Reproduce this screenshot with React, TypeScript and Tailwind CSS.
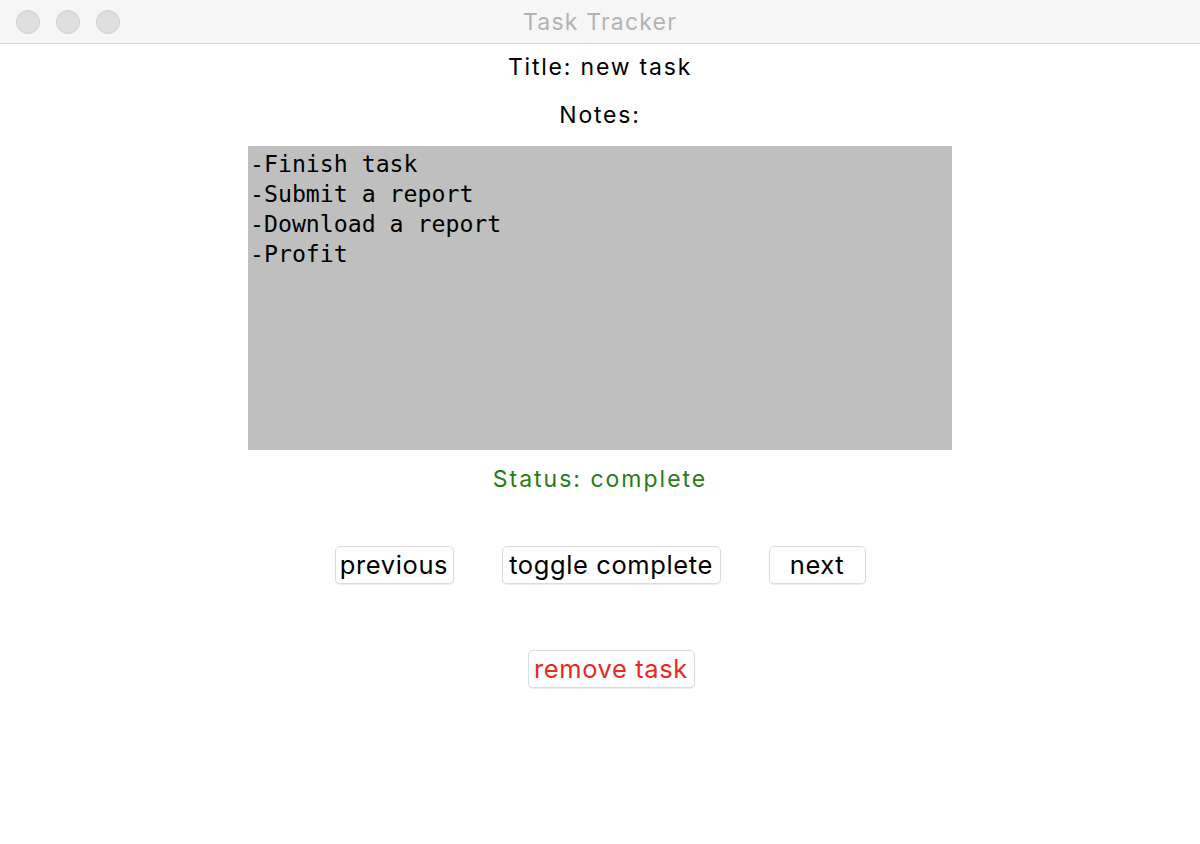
const notes = ["-Finish task", "-Submit a report", "-Download a report", "-Profit"];

const Button = ({ label, className }: { label: string; className: string }) => (
  <button
    className={`h-[38px] rounded-[5px] border border-[#dcdcdc] bg-white text-[25.5px] leading-none tracking-[0.6px] shadow-[0_1px_1px_rgba(0,0,0,0.08)] ${className}`}
  >
    {label}
  </button>
);

export default function App() {
  return (
    <div className="flex h-[844px] w-[1200px] flex-col bg-white font-['Inter','Liberation_Sans',sans-serif]">
      {/* title bar */}
      <div className="relative flex h-[44px] shrink-0 items-center justify-center border-b border-[#d4d4d4] bg-[#f6f6f6]">
        <div className="absolute left-[16px] top-[10px] flex gap-[16px]">
          {[0, 1, 2].map((i) => (
            <div key={i} className="h-[24px] w-[24px] rounded-full border border-[#cfcfcf] bg-[#dedede]" />
          ))}
        </div>
        <span className="pt-[2px] text-[23px] tracking-[1.2px] text-[#b3b3b3]">Task Tracker</span>
      </div>

      <div className="flex flex-col items-center">
        <div className="mt-[8px] h-[30px] text-[23px] leading-[30px] tracking-[1.8px] text-black">Title: new task</div>
        <div className="mt-[18px] h-[30px] text-[23px] leading-[30px] tracking-[1.8px] text-black">Notes:</div>

        <div className="mt-[16px] h-[304px] w-[704px] bg-[#bfbfbf] px-[2px] pt-[3px] font-['DejaVu_Sans_Mono','Liberation_Mono',monospace] text-[23.2px] leading-[30px] text-black">
          {notes.map((n) => (
            <div key={n}>{n}</div>
          ))}
        </div>

        <div className="mt-[14px] h-[30px] text-[23px] leading-[30px] tracking-[2px] text-[#2a7b18]">Status: complete</div>

        <div className="mt-[52px] flex gap-[48px]">
          <Button label="previous" className="w-[119px] text-black" />
          <Button label="toggle complete" className="w-[219px] text-black" />
          <Button label="next" className="w-[97px] text-black" />
        </div>

        <Button label="remove task" className="ml-[22px] mt-[66px] w-[167px] text-[#e8291f]" />
      </div>
    </div>
  );
}
